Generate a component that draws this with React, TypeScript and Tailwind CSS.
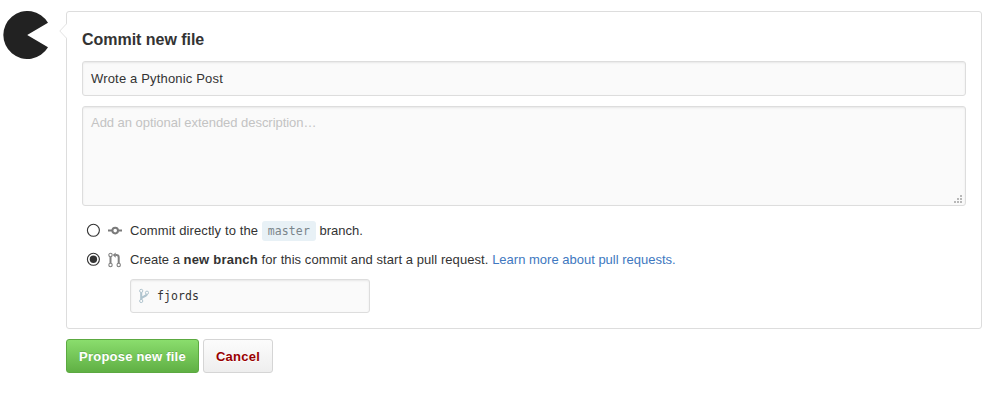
import type { ReactNode } from "react";

function Avatar() {
  return (
    <svg className="ml-[3px] mt-[11px] block h-12 w-12 shrink-0" viewBox="0 0 48 48" aria-hidden="true">
      <path d="M24.2 24 45 11.8A24 24 0 1 0 45 36.2Z" fill="#222" />
    </svg>
  );
}

function CommitIcon() {
  return (
    <svg className="block h-4 w-[14px]" viewBox="0 0 14 16" fill="none" stroke="#7a7a7a" strokeWidth="2" aria-hidden="true">
      <path d="M0 7.6h4M10.4 7.6H14" />
      <circle cx="7.2" cy="7.6" r="2.8" />
    </svg>
  );
}

function PullRequestIcon() {
  return (
    <svg className="block h-4 w-[14px]" viewBox="0 0 14 16" fill="none" stroke="#808080" aria-hidden="true">
      <path d="M2.5 4.5v7M10.7 11.5V5.2c0-1.4-.7-2-2.2-2.1H7.4" strokeWidth="2" />
      <path d="M7.7.4v5.3L4.7 3.05Z" fill="#808080" stroke="none" />
      <g strokeWidth="1.1">
        <circle cx="2.5" cy="3" r="1.7" fill="#fff" />
        <circle cx="2.5" cy="13" r="1.7" fill="#fff" />
        <circle cx="10.7" cy="13" r="1.7" fill="#fff" />
      </g>
    </svg>
  );
}

function BranchIcon() {
  return (
    <svg className="block h-4 w-[10px] shrink-0" viewBox="0 0 10 16" fill="none" stroke="#b0c4ce" aria-hidden="true">
      <path d="M2.2 4v8.5M8 5.5c0 3.6-5.3 2.4-5.7 5.4" strokeWidth="2.1" />
      <g strokeWidth="1">
        <circle cx="2.2" cy="2.9" r="1.6" fill="#fafafa" />
        <circle cx="2.2" cy="13" r="1.6" fill="#fafafa" />
        <circle cx="8" cy="4.7" r="1.6" fill="#fafafa" />
      </g>
    </svg>
  );
}

function Choice({ checked, icon, children }: { checked?: boolean; icon: ReactNode; children: ReactNode }) {
  return (
    <label className="flex h-5 items-center">
      <svg className="-mt-0.5 ml-1 block h-[14px] w-[14px] shrink-0" viewBox="0 0 14 14" role="radio" aria-checked={!!checked}>
        <circle cx="7.4" cy="7.3" r="6" fill="#fff" stroke="#333" strokeWidth="1.1" />
        {checked && <circle cx="7.4" cy="7.3" r="3.7" fill="#333" />}
      </svg>
      <span className="ml-2 w-[22px] shrink-0">{icon}</span>
      <span className="whitespace-nowrap">{children}</span>
    </label>
  );
}

const field =
  "rounded-[3px] border border-[#ddd] bg-[#fafafa] shadow-[inset_0_1px_2px_rgba(0,0,0,0.075)]";

export default function App() {
  return (
    <div className="flex h-[410px] w-[991px] items-start overflow-hidden bg-white font-['Liberation_Sans',Arial,sans-serif] text-[13px] leading-5 text-[#333]">
      <Avatar />
      <div className="ml-[15px] mt-[11px] w-[916px]">
        <section className="relative h-[318px] rounded-[3px] border border-[#ddd] bg-white px-[15px] pt-[18px]">
          <svg className="absolute -left-2 top-[11px] h-4 w-2" viewBox="0 0 8 16" aria-hidden="true">
            <path d="M8 .5.8 8 8 15.5Z" fill="#fff" />
            <path d="M7.5.8.8 8l6.7 7.2" fill="none" stroke="#e2e2e2" />
          </svg>
          <h2 className="h-5 text-base font-bold leading-5 tracking-[-0.03px]">Commit new file</h2>
          <div className={`mt-[11px] flex h-[35px] items-center px-2 tracking-[0.17px] ${field}`}>Wrote a Pythonic Post</div>
          <div className={`mt-[10px] flex h-[100px] justify-between pl-2 pr-[3px] pt-[6px] ${field}`}>
            <span className="tracking-[-0.04px] text-[#c3c3c3]">Add an optional extended description…</span>
            <svg className="mb-[2px] h-2 w-2 self-end" viewBox="0 0 8 8" fill="#b8b8b8" shapeRendering="crispEdges" aria-hidden="true">
              <path d="M6 0h2v2H6zM3 3h2v2H3zM6 3h2v2H6zM0 6h2v2H0zM3 6h2v2H3zM6 6h2v2H6z" />
            </svg>
          </div>
          <div className="mt-[15px]">
            <Choice icon={<CommitIcon />}>
              <span className="tracking-[0.11px]">Commit directly to the </span>
              <code className="inline-block h-5 rounded-[3px] bg-[#e8f1f6] px-1.5 font-['DejaVu_Sans_Mono',monospace] text-[11.5px] leading-5 tracking-[0.08px] text-[#7b858b]">
                master
              </code>{" "}
              branch.
            </Choice>
          </div>
          <div className="mt-[9px]">
            <Choice checked icon={<PullRequestIcon />}>
              Create a <strong className="tracking-[0.22px]">new branch</strong>
              <span className="tracking-[0.07px]"> for this commit and start a pull request. </span>
              <a className="text-[#4078c0]">Learn more about pull requests.</a>
            </Choice>
          </div>
          <div className={`ml-12 mt-[9px] flex h-[34px] w-[240px] items-center pl-2 ${field}`}>
            <BranchIcon />
            <span className="ml-2 font-['DejaVu_Sans_Mono',monospace] text-[11.5px] tracking-[0.08px]">fjords</span>
          </div>
        </section>
        <div className="mt-[10px] flex gap-1">
          <button className="h-[34px] w-[133px] whitespace-nowrap rounded-[3px] border border-[#5ca941] bg-linear-to-b from-[#8add6d] to-[#60b044] pt-px font-bold tracking-[0.22px] text-white [text-shadow:0_-1px_0_rgba(0,0,0,0.15)]">
            Propose new file
          </button>
          <button className="h-[34px] w-[70px] rounded-[3px] border border-[#d5d5d5] bg-linear-to-b from-[#fcfcfc] to-[#eee] pt-px font-bold tracking-[0.25px] text-[#900] [text-shadow:0_1px_0_rgba(255,255,255,0.9)]">
            Cancel
          </button>
        </div>
      </div>
    </div>
  );
}
